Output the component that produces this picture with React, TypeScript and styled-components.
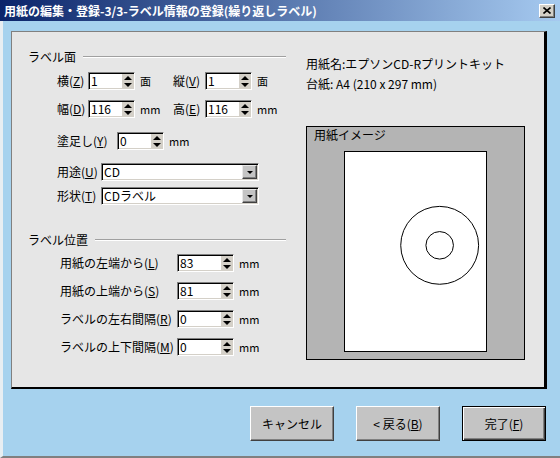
import styled, { createGlobalStyle } from "styled-components";

const GlobalStyle = createGlobalStyle`
  html, body {
    margin: 0;
    padding: 0;
  }
  body {
    font-family: "Noto Sans CJK JP", "Noto Sans", sans-serif;
    font-size: 12px;
    color: #000;
    background: #a6d2ee;
  }
`;

const Window = styled.div`
  width: 560px;
  height: 458px;
  display: flex;
  flex-direction: column;
`;

const TitleBar = styled.div`
  height: 21px;
  flex-shrink: 0;
  display: flex;
  align-items: center;
  justify-content: space-between;
  padding: 0 5px 0 4px;
  background: linear-gradient(to right, #0a246a, #a6caf0);
  color: #fff;
  font-weight: bold;
  font-size: 12px;
  line-height: 14px;
`;

const CloseButton = styled.div`
  width: 16px;
  height: 14px;
  box-sizing: border-box;
  display: flex;
  align-items: center;
  justify-content: center;
  background: #d4d0c8;
  border-top: 1px solid #fff;
  border-left: 1px solid #fff;
  border-right: 1px solid #404040;
  border-bottom: 1px solid #404040;
  box-shadow: inset -1px -1px #808080;
`;

const Body = styled.div`
  flex: 1;
  display: flex;
  flex-direction: column;
  background: #a6d2ee;
  border-left: 3px solid #e8eef2;
  border-bottom: 2px solid #808080;
  padding: 10px 0 0 8px;
`;

const Panel = styled.div`
  width: 536px;
  height: 358px;
  box-sizing: border-box;
  display: flex;
  background: #e6e6e6;
  border-top: 1px solid #808080;
  border-left: 1px solid #808080;
  border-right: 3px solid #000;
  border-bottom: 2px solid #000;
  padding: 18px 0 0 16px;
`;

const LeftColumn = styled.div`
  width: 258px;
  display: flex;
  flex-direction: column;
`;

const RightColumn = styled.div`
  margin-left: 20px;
  padding-top: 7px;
  display: flex;
  flex-direction: column;
`;

const GroupHeader = styled.div<{ $top?: number }>`
  height: 14px;
  display: flex;
  align-items: center;
  line-height: 14px;
  margin-top: ${(p) => p.$top ?? 0}px;

  &::after {
    content: "";
    flex: 1;
    margin-left: 7px;
    border-top: 1px solid #a0a0a0;
    border-bottom: 1px solid #fff;
  }
`;

const Row = styled.div<{ $top: number; $indent: number }>`
  height: 18px;
  display: flex;
  align-items: center;
  margin-top: ${(p) => p.$top}px;
  padding-left: ${(p) => p.$indent}px;
  line-height: 14px;
  white-space: nowrap;
`;

const Label = styled.span<{ $w: number }>`
  width: ${(p) => p.$w}px;
  flex-shrink: 0;
`;

const Unit = styled.span<{ $w?: number }>`
  padding-left: 5px;
  width: ${(p) => (p.$w ? `${p.$w}px` : "auto")};
  box-sizing: border-box;
  flex-shrink: 0;
  font-size: 11px;
`;

const Sunken = styled.div<{ $w: number }>`
  width: ${(p) => p.$w}px;
  height: 18px;
  box-sizing: border-box;
  display: flex;
  align-items: stretch;
  flex-shrink: 0;
  background: #fff;
  border-top: 1px solid #808080;
  border-left: 1px solid #808080;
  border-right: 1px solid #fff;
  border-bottom: 1px solid #fff;
  box-shadow: inset 1px 1px #000, inset -1px -1px #d4d0c8;
  padding: 1px 1px 1px 0;
`;

const Value = styled.span`
  flex: 1;
  display: flex;
  align-items: center;
  padding-left: 2px;
  font-size: 12px;
  line-height: 16px;
  margin: -1px 0;
`;

const Spin = styled.div`
  width: 11px;
  display: flex;
  flex-direction: column;
  background: #d4d0c8;
`;

const SpinHalf = styled.div`
  flex: 1;
  display: flex;
  align-items: center;
  justify-content: center;
`;

const ArrowUp = styled.span`
  width: 0;
  height: 0;
  border-left: 4px solid transparent;
  border-right: 4px solid transparent;
  border-bottom: 4px solid #000;
`;

const ArrowDown = styled.span<{ $size?: number }>`
  width: 0;
  height: 0;
  border-left: ${(p) => p.$size ?? 4}px solid transparent;
  border-right: ${(p) => p.$size ?? 4}px solid transparent;
  border-top: ${(p) => p.$size ?? 4}px solid #000;
`;

const DropButton = styled.div`
  width: 15px;
  box-sizing: border-box;
  display: flex;
  align-items: center;
  justify-content: center;
  background: #c4c4c4;
  border-top: 1px solid #e8e8e8;
  border-left: 1px solid #e8e8e8;
  border-right: 1px solid #404040;
  border-bottom: 1px solid #404040;
  box-shadow: inset -1px -1px #808080;
`;

const InfoLine = styled.div<{ $top?: number }>`
  line-height: 14px;
  margin-top: ${(p) => p.$top ?? 0}px;
  white-space: nowrap;
`;

const Preview = styled.div`
  margin-top: 35px;
  width: 219px;
  height: 234px;
  box-sizing: border-box;
  display: flex;
  flex-direction: column;
  background: #b4b4b4;
  border: 1px solid #000;
`;

const PreviewLabel = styled.div`
  padding: 1px 0 0 7px;
  line-height: 14px;
`;

const Paper = styled.div`
  margin-top: 9px;
  align-self: center;
  width: 143px;
  height: 201px;
  box-sizing: border-box;
  background: #fff;
  border: 1px solid #000;
  display: flex;
`;

const ButtonRow = styled.div`
  display: flex;
  justify-content: flex-end;
  gap: 22px;
  margin-top: 17px;
  padding-right: 14px;
`;

const DialogButton = styled.button<{ $default?: boolean }>`
  width: 84px;
  height: 35px;
  box-sizing: border-box;
  padding: 0;
  font-family: "Noto Sans CJK JP", "Noto Sans", sans-serif;
  font-size: 12px;
  color: #000;
  background: #c4c4c4;
  border: 1px solid;
  border-color: ${(p) => (p.$default ? "#000" : "#fff #404040 #404040 #fff")};
  box-shadow: ${(p) =>
    p.$default
      ? "inset 1px 1px #fff, inset -1px -1px #404040, inset -2px -2px #808080"
      : "inset -1px -1px #808080"};
`;

const SpinField = ({ value, w }: { value: string; w: number }) => (
  <Sunken $w={w}>
    <Value>{value}</Value>
    <Spin>
      <SpinHalf>
        <ArrowUp />
      </SpinHalf>
      <SpinHalf>
        <ArrowDown />
      </SpinHalf>
    </Spin>
  </Sunken>
);

const SelectField = ({ value }: { value: string }) => (
  <Sunken $w={158}>
    <Value>{value}</Value>
    <DropButton>
      <ArrowDown $size={3} />
    </DropButton>
  </Sunken>
);

// paper is 210 x 297 mm, drawn into the 141 x 199 px inside of the preview
const SCALE = 141 / 210;
const label = { left: 83, top: 81, size: 116, hole: 41 };

const PaperImage = () => {
  const cx = (label.left + label.size / 2) * SCALE;
  const cy = (label.top + label.size / 2) * SCALE;
  return (
    <svg width="141" height="199" viewBox="0 0 141 199">
      <circle cx={cx} cy={cy} r={(label.size / 2) * SCALE} fill="none" stroke="#000" strokeWidth="1" />
      <circle cx={cx} cy={cy} r={(label.hole / 2) * SCALE} fill="none" stroke="#000" strokeWidth="1" />
    </svg>
  );
};

const positions = [
  { text: "用紙の左端から", key: "L", value: "83", top: 7 },
  { text: "用紙の上端から", key: "S", value: "81", top: 10 },
  { text: "ラベルの左右間隔", key: "R", value: "0", top: 10 },
  { text: "ラベルの上下間隔", key: "M", value: "0", top: 10 },
];

export default function App() {
  return (
    <>
      <GlobalStyle />
      <Window>
        <TitleBar>
          <span>用紙の編集・登録-3/3-ラベル情報の登録(繰り返しラベル)</span>
          <CloseButton>
            <svg width="8" height="7" viewBox="0 0 8 7">
              <path d="M0.5 0.5 L7.5 6.5 M7.5 0.5 L0.5 6.5" stroke="#000" strokeWidth="1.6" />
            </svg>
          </CloseButton>
        </TitleBar>
        <Body>
          <Panel>
            <LeftColumn>
              <GroupHeader>ラベル面</GroupHeader>
              <Row $top={8} $indent={29}>
                <Label $w={31}>
                  横(<u>Z</u>)
                </Label>
                <SpinField value="1" w={47} />
                <Unit $w={38}>面</Unit>
                <Label $w={32}>
                  縦(<u>V</u>)
                </Label>
                <SpinField value="1" w={47} />
                <Unit>面</Unit>
              </Row>
              <Row $top={10} $indent={29}>
                <Label $w={31}>
                  幅(<u>D</u>)
                </Label>
                <SpinField value="116" w={47} />
                <Unit $w={38}>mm</Unit>
                <Label $w={32}>
                  高(<u>E</u>)
                </Label>
                <SpinField value="116" w={47} />
                <Unit>mm</Unit>
              </Row>
              <Row $top={14} $indent={29}>
                <Label $w={60}>
                  塗足し(<u>Y</u>)
                </Label>
                <SpinField value="0" w={47} />
                <Unit>mm</Unit>
              </Row>
              <Row $top={13} $indent={29}>
                <Label $w={44}>
                  用途(<u>U</u>)
                </Label>
                <SelectField value="CD" />
              </Row>
              <Row $top={6} $indent={29}>
                <Label $w={44}>
                  形状(<u>T</u>)
                </Label>
                <SelectField value="CDラベル" />
              </Row>

              <GroupHeader $top={28}>ラベル位置</GroupHeader>
              {positions.map((p) => (
                <Row key={p.key} $top={p.top} $indent={32}>
                  <Label $w={117}>
                    {p.text}(<u>{p.key}</u>)
                  </Label>
                  <SpinField value={p.value} w={57} />
                  <Unit>mm</Unit>
                </Row>
              ))}
            </LeftColumn>

            <RightColumn>
              <InfoLine>用紙名:エプソンCD-Rプリントキット</InfoLine>
              <InfoLine $top={6}>台紙: A4 (210 x 297 mm)</InfoLine>
              <Preview>
                <PreviewLabel>用紙イメージ</PreviewLabel>
                <Paper>
                  <PaperImage />
                </Paper>
              </Preview>
            </RightColumn>
          </Panel>

          <ButtonRow>
            <DialogButton>キャンセル</DialogButton>
            <DialogButton>&lt; 戻る(<u>B</u>)</DialogButton>
            <DialogButton $default>
              完了(<u>F</u>)
            </DialogButton>
          </ButtonRow>
        </Body>
      </Window>
    </>
  );
}
